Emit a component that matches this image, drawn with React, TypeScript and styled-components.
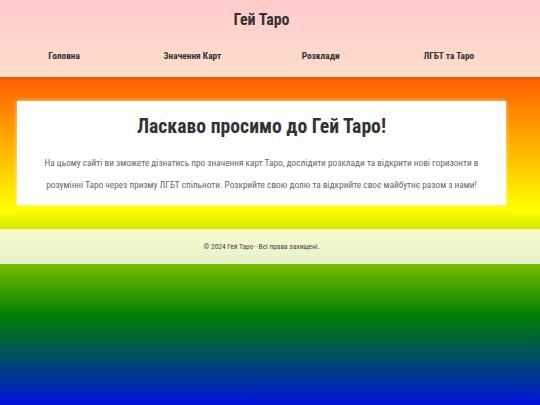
import React from "react";
import styled, { createGlobalStyle } from "styled-components";

const GlobalStyle = createGlobalStyle`
  html, body {
    margin: 0;
    padding: 0;
  }
  body {
    font-family: Roboto, "Liberation Sans", Arial, sans-serif;
    font-stretch: 75%;
  }
  * { box-sizing: border-box; }
`;

const Page = styled.div`
  min-height: 100vh;
  display: flex;
  flex-direction: column;
  background: linear-gradient(
    to bottom,
    #ff0000 0px,
    #ff7f00 105px,
    #ffff00 210px,
    #008000 315px,
    #0000ff 420px,
    #4b0082 525px,
    #8b00ff 630px
  );
`;

const Header = styled.header`
  background: rgba(255, 255, 255, 0.8);
  padding: 10px 17px 14px 0;
  box-shadow: 0 2px 4px rgba(0, 0, 0, 0.08);
`;

const SiteTitle = styled.h1`
  margin: 0;
  text-align: center;
  font-size: 16px;
  line-height: 20px;
  font-weight: 700;
  color: #333;
`;

const Nav = styled.nav`
  margin-top: 19px;
  padding-right: 10px;
  display: grid;
  grid-template-columns: repeat(4, 1fr);
`;

const NavLink = styled.a`
  text-align: center;
  font-size: 9.4px;
  line-height: 14px;
  font-weight: 700;
  color: #333;
  text-decoration: none;
`;

const Main = styled.main`
  padding: 24px 34px 24px 17px;
`;

const Card = styled.section`
  background: #fff;
  padding: 13px 20px 9px;
  text-align: center;
  box-shadow: 0 0 4px rgba(255, 255, 255, 0.7);
`;

const CardTitle = styled.h2`
  margin: 0 0 12px;
  font-size: 19.7px;
  line-height: 26px;
  font-weight: 700;
  color: #333;
`;

const CardText = styled.p`
  margin: 0;
  font-size: 9.3px;
  line-height: 22px;
  color: #666;
`;

const Footer = styled.footer`
  background: rgba(255, 255, 255, 0.8);
  padding: 11px 17px 11px 0;
  text-align: center;
  font-size: 7.4px;
  line-height: 13px;
  color: #444;
`;

const links = ["Головна", "Значення Карт", "Розклади", "ЛГБТ та Таро"];

export default function App() {
  return (
    <>
      <GlobalStyle />
      <Page>
        <Header>
          <SiteTitle>Гей Таро</SiteTitle>
          <Nav>
            {links.map((l) => (
              <NavLink key={l} href="#">
                {l}
              </NavLink>
            ))}
          </Nav>
        </Header>
        <Main>
          <Card>
            <CardTitle>Ласкаво просимо до Гей Таро!</CardTitle>
            <CardText>
              На цьому сайті ви зможете дізнатись про значення карт Таро, дослідити розклади та відкрити нові
              горизонти в розумінні Таро через призму ЛГБТ спільноти. Розкрийте свою долю та відкрийте своє
              майбутнє разом з нами!
            </CardText>
          </Card>
        </Main>
        <Footer>© 2024 Гей Таро - Всі права захищені.</Footer>
      </Page>
    </>
  );
}
